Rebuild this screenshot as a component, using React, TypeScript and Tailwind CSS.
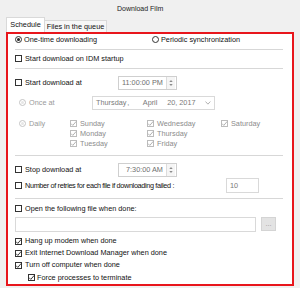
import React from "react";

const Check = ({ checked = false, disabled = false }: { checked?: boolean; disabled?: boolean }) => (
  <span
    className={
      "relative inline-block w-[7px] h-[7px] shrink-0 border bg-white " +
      (disabled ? "border-[#bcbcbc]" : "border-[#333333]")
    }
  >
    {checked && (
      <svg viewBox="0 0 7 7" className="absolute left-[-1px] top-[-1px] w-[7px] h-[7px]" overflow="visible">
        <polyline
          points="1,3.6 2.8,5.4 6.2,1.4"
          fill="none"
          stroke={disabled ? "#a8a8a8" : "#222222"}
          strokeWidth="0.9"
        />
      </svg>
    )}
  </span>
);

const Radio = ({ checked = false, disabled = false }: { checked?: boolean; disabled?: boolean }) => (
  <span
    className={
      "relative inline-flex items-center justify-center w-[7px] h-[7px] shrink-0 rounded-full border bg-white " +
      (disabled ? "border-[#c4c4c4]" : "border-[#333333]")
    }
  >
    {checked && <span className="w-[3px] h-[3px] rounded-full bg-[#222222]" />}
    {disabled && !checked && <span className="w-[3px] h-[3px] rounded-full bg-[#e6e6e6]" />}
  </span>
);

const Sep = ({ mt }: { mt: string }) => <div className={mt + " h-[1px] bg-[#d7d7d7] w-full"} />;

const Spinner = () => (
  <div className="w-[9px] h-[12px] border-l border-[#dcdcdc] flex flex-col items-center justify-center gap-[2px] bg-[#f5f5f5]">
    <svg viewBox="0 0 5 3" className="w-[4px] h-[2px]">
      <polygon points="0,3 2.5,0 5,3" fill="#8a8a8a" />
    </svg>
    <svg viewBox="0 0 5 3" className="w-[4px] h-[2px]">
      <polygon points="0,0 2.5,3 5,0" fill="#8a8a8a" />
    </svg>
  </div>
);

const Day = ({ label }: { label: string }) => (
  <div className="flex items-center gap-[3px]">
    <Check checked disabled />
    <span className="text-[#8c8c8c]">{label}</span>
  </div>
);

export default function App() {
  return (
    <div
      className="relative w-[300px] h-[288px] bg-[#f0f0f0] overflow-hidden text-[7.3px] leading-none text-[#111111]"
      style={{ fontFamily: '"Liberation Sans", Arial, sans-serif' }}
    >
      <div className="h-[17px] pl-[117px] pt-[5px] text-[7px] text-[#222222]">Download Film</div>
      <div className="relative h-[15px] flex items-end pl-[6px]">
        <div className="relative z-10 h-[15px] w-[39px] bg-white border border-b-0 border-[#d9d9d9] flex items-center justify-center pb-[1px]">
          Schedule
        </div>
        <div className="h-[12px] w-[62px] bg-[#f7f7f7] border border-l-0 border-b-0 border-[#d9d9d9] flex items-center justify-center whitespace-nowrap">
          Files in the queue
        </div>
      </div>
      <div className="ml-[6px] w-[288px] h-[254px] border-2 border-[#e8161c] bg-white pl-[7px] pr-[9px] flex flex-col">
        {/* radios */}
        <div className="h-[12px] flex items-center">
          <div className="flex items-center gap-[2px] w-[137px]">
            <Radio checked />
            <span>One-time downloading</span>
          </div>
          <div className="flex items-center gap-[2px]">
            <Radio />
            <span>Periodic synchronization</span>
          </div>
        </div>
        <Sep mt="mt-[3px]" />
        <div className="mt-[2px] h-[13px] flex items-center gap-[3px]">
          <Check />
          <span>Start download on IDM startup</span>
        </div>
        <Sep mt="mt-[3px]" />
        {/* start download at */}
        <div className="mt-[6px] h-[15px] flex items-center">
          <div className="w-[103px] flex items-center gap-[3px]">
            <Check />
            <span>Start download at</span>
          </div>
          <div className="w-[59px] h-[14px] border border-[#cfcfcf] flex items-center justify-between pl-[3px] pr-[1px]">
            <span className="text-[#6f6f6f]">11:00:00 PM</span>
            <Spinner />
          </div>
        </div>
        {/* once at */}
        <div className="mt-[6px] h-[14px] flex items-center pl-[4px]">
          <div className="w-[73px] flex items-center gap-[3px]">
            <Radio disabled />
            <span className="text-[#9a9a9a]">Once at</span>
          </div>
          <div className="w-[123px] h-[14px] border border-[#d9d9d9] flex items-center pl-[3px] pr-[3px] text-[#7a7a7a]">
            <span className="w-[32px]">Thursday</span>
            <span className="w-[16px]">,</span>
            <span className="w-[25px]">April</span>
            <span className="w-[38px]">20, 2017</span>
            <svg viewBox="0 0 6 4" className="w-[6px] h-[4px] ml-[1px]">
              <polyline points="0.5,0.5 3,3.2 5.5,0.5" fill="none" stroke="#9a9a9a" strokeWidth="0.8" />
            </svg>
          </div>
        </div>
        {/* daily */}
        <div className="mt-[8px] flex pl-[4px]">
          <div className="w-[51px] h-[11px] flex items-center gap-[3px]">
            <Radio disabled />
            <span className="text-[#9a9a9a]">Daily</span>
          </div>
          <div className="flex flex-col w-[77px]">
            <div className="h-[11px] flex items-center"><Day label="Sunday" /></div>
            <div className="h-[10px] flex items-center"><Day label="Monday" /></div>
            <div className="h-[10px] flex items-center"><Day label="Tuesday" /></div>
          </div>
          <div className="flex flex-col w-[74px]">
            <div className="h-[11px] flex items-center"><Day label="Wednesday" /></div>
            <div className="h-[10px] flex items-center"><Day label="Thursday" /></div>
            <div className="h-[10px] flex items-center"><Day label="Friday" /></div>
          </div>
          <div className="flex flex-col">
            <div className="h-[11px] flex items-center"><Day label="Saturday" /></div>
          </div>
        </div>
        <Sep mt="mt-[6px]" />
        {/* stop download */}
        <div className="mt-[7px] h-[14px] flex items-center">
          <div className="w-[103px] flex items-center gap-[3px]">
            <Check />
            <span>Stop download at</span>
          </div>
          <div className="w-[59px] h-[14px] border border-[#cfcfcf] flex items-center justify-between pl-[7px] pr-[1px]">
            <span className="text-[#6f6f6f]">7:30:00 AM</span>
            <Spinner />
          </div>
        </div>
        {/* retries */}
        <div className="mt-[1px] h-[15px] flex items-center">
          <div className="w-[211px] flex items-center gap-[3px]">
            <Check />
            <span className="tracking-[-0.35px]">Number of retries for each file if downloading failed :</span>
          </div>
          <div className="w-[33px] h-[15px] border border-[#d9d9d9] flex items-center pl-[3px] text-[#7a7a7a]">
            10
          </div>
        </div>
        <Sep mt="mt-[5px]" />
        <div className="mt-[3px] h-[13px] flex items-center gap-[3px]">
          <Check />
          <span>Open the following file when done:</span>
        </div>
        <div className="mt-[2px] h-[15px] flex items-start">
          <div className="w-[241px] h-[15px] border border-[#d9d9d9] bg-white" />
          <div className="ml-[5px] w-[15px] h-[14px] bg-[#e3e3e3] border border-[#d4d4d4] flex items-center justify-center text-[#9a9a9a]">
            ...
          </div>
        </div>
        <div className="mt-[3px] h-[12px] flex items-center gap-[3px]">
          <Check checked />
          <span>Hang up modem when done</span>
        </div>
        <div className="h-[12px] flex items-center gap-[3px]">
          <Check checked />
          <span>Exit Internet Download Manager when done</span>
        </div>
        <div className="h-[12px] flex items-center gap-[3px]">
          <Check checked />
          <span>Turn off computer when done</span>
        </div>
        <div className="h-[13px] flex items-center gap-[2px] pl-[13px]">
          <Check checked />
          <span>Force processes to terminate</span>
        </div>
      </div>
    </div>
  );
}
